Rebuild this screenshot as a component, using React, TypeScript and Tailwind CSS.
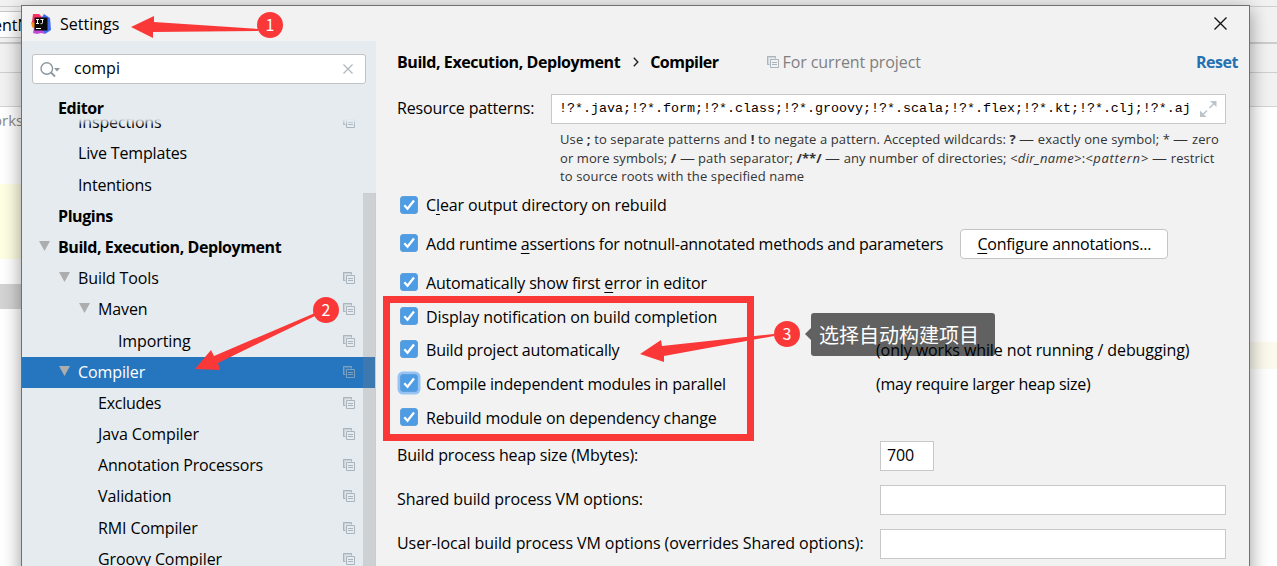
import type { ReactNode } from "react";

type TreeItem = { label: string; indent: string; arrow?: boolean; bold?: boolean; copy?: boolean; selected?: boolean; track: string };

const tree: TreeItem[] = [
  { label: "Inspections", indent: "pl-[56px]", copy: true, track: "tracking-[-0.15px]" },
  { label: "Live Templates", indent: "pl-[56px]", track: "tracking-[-0.15px]" },
  { label: "Intentions", indent: "pl-[56px]", track: "tracking-[-0.2px]" },
  { label: "Plugins", indent: "pl-[36px]", bold: true, track: "tracking-[-0.42px]" },
  { label: "Build, Execution, Deployment", indent: "pl-[36px]", arrow: true, bold: true, track: "tracking-[-0.43px]" },
  { label: "Build Tools", indent: "pl-[56px]", arrow: true, copy: true, track: "tracking-[-0.1px]" },
  { label: "Maven", indent: "pl-[76px]", arrow: true, copy: true, track: "tracking-[-0.1px]" },
  { label: "Importing", indent: "pl-[96px]", copy: true, track: "tracking-[-0.1px]" },
  { label: "Compiler", indent: "pl-[56px]", arrow: true, copy: true, selected: true, track: "tracking-[-0.1px]" },
  { label: "Excludes", indent: "pl-[76px]", copy: true, track: "tracking-[-0.25px]" },
  { label: "Java Compiler", indent: "pl-[76px]", copy: true, track: "tracking-[-0.1px]" },
  { label: "Annotation Processors", indent: "pl-[76px]", copy: true, track: "tracking-[-0.18px]" },
  { label: "Validation", indent: "pl-[76px]", copy: true, track: "tracking-[-0.1px]" },
  { label: "RMI Compiler", indent: "pl-[76px]", copy: true, track: "tracking-[-0.1px]" },
  { label: "Groovy Compiler", indent: "pl-[76px]", copy: true, track: "tracking-[-0.1px]" },
];

function CopyIcon({ className = "" }: { className?: string }) {
  return (
    <svg className={className} width="12" height="12" viewBox="0 0 12 12" fill="none" stroke="currentColor">
      <path d="M0 0h9v2.200H2.200V9H0z" fill="currentColor" fillOpacity="0.450" stroke="none" />
      <path d="M2.500 8.500h-2v-8h8v2" />
      <path d="M3.500 3.500h8v8h-8z" />
      <path d="M5 6.500h5M5 8.500h5" />
    </svg>
  );
}

function Logo() {
  return (
    <svg width="20" height="20" viewBox="0 0 20 20">
      <path d="M1 8l1-8 6 0 4 4-6 9-5 0z" fill="#fc3162" />
      <path d="M0 8l5 1v7l-4-3z" fill="#fb8a1e" />
      <path d="M11 3l2-3 6 4 1 12-6 4-4-5z" fill="#3f6cf2" />
      <path d="M2 19l1-5 8 1 3 5-4-1-4 1z" fill="#c14bd8" />
      <path d="M3.500 3.500h13v13h-13z" fill="#0a0a0a" />
      <path d="M5 5.500h3M6.500 5.500v4M5 9.500h3M9.500 5.500h3M11.500 5.500v3.200q0 1-1.200 1H9.500M5 14.500h5" stroke="#fff" fill="none" />
    </svg>
  );
}

function Check({ top, focus, children, track }: { top: string; focus?: boolean; children: ReactNode; track: string }) {
  return (
    <label className={`flex h-[24px] items-center ${top}`}>
      <span className={`-mt-0.5 flex size-[18px] items-center justify-center rounded-[3px] border border-[#5f9fdb] bg-[#4e9de4] ${focus ? "border-[#3f7fc4] ring-[2.500px] ring-[#97c3f3]" : ""}`}>
        <svg width="14" height="14" viewBox="0 0 14 14" fill="none" stroke="#fff" strokeWidth="2.300">
          <path d="M2.300 7.300l3.200 3.400L12 2.500" />
        </svg>
      </span>
      <span className={`ml-2 ${track}`}>{children}</span>
    </label>
  );
}

function Mn({ children }: { children: ReactNode }) {
  return <span className="underline decoration-1 underline-offset-[3px]">{children}</span>;
}

function Dash() {
  return <span className="inline-block w-[15px] origin-left scale-x-[1.15]">—</span>;
}

function Field({ className = "", children }: { className?: string; children?: ReactNode }) {
  return <div className={`flex items-center border border-[#c8c8c8] bg-white ${className}`}>{children}</div>;
}

function Backdrop() {
  return (
    <div className="absolute inset-0 flex flex-col bg-white text-[16px]">
      <div className="h-[7px] shrink-0 border-b border-[#cfcfcf] bg-[#f2f2f2]" />
      <div className="flex h-[35px] shrink-0 items-center bg-[#f2f2f2]">
        <div className="h-[27px] w-[60px] border-y border-[#c8c8c8] bg-white leading-[26px] whitespace-nowrap"><span className="-ml-[7px]">entN</span></div>
      </div>
      <div className="h-[2px] shrink-0 bg-[#cccccc]" />
      <div className="h-[29px] shrink-0 border-b border-[#cfcfcf] bg-[#f2f2f2]" />
      <div className="h-[34px] shrink-0 border-b border-[#d4d4d4] bg-[#f2f2f2]" />
      <div className="h-[77px] shrink-0 pt-px text-[15px] text-[#8c8880]"><span className="-ml-[7px]">orks</span></div>
      <div className="h-[75px] w-[60px] shrink-0 bg-[#ffffe4]" />
      <div className="mt-[25px] h-[25px] w-[60px] shrink-0 bg-[#d4d4d4]" />
      <div className="mt-[33px] ml-auto h-[27px] w-[60px] shrink-0 bg-[#fcfaed]" />
    </div>
  );
}

function Sidebar() {
  return (
    <aside className="relative flex w-[354px] shrink-0 flex-col overflow-hidden bg-[#e6ebef]">
      <div className="mx-[10px] mt-[13px] flex h-[30px] w-[334px] shrink-0 items-center rounded-[3px] border border-[#c0c4c7] bg-white pl-[7px]">
        <svg width="21" height="17" viewBox="0 0 21 17" fill="none" stroke="#8c979e" strokeWidth="1.400">
          <circle cx="6.800" cy="7.500" r="5.800" />
          <path d="M11 11.500l4 4" strokeWidth="1.800" />
          <path d="M14 7h6l-3 3.500z" fill="#8c979e" stroke="none" />
        </svg>
        <span className="ml-[13px] grow pb-[2px]">compi</span>
        <svg className="mr-[12px]" width="10" height="10" viewBox="0 0 10 10" stroke="#b0b6ba" strokeWidth="1.200">
          <path d="M.5.5l9 9M9.500.5l-9 9" />
        </svg>
      </div>
      <div className="z-10 mt-[12px] h-[23px] shrink-0 bg-[#e6ebef] pl-[36px] leading-[25px] font-bold tracking-[-0.42px]">Editor</div>
      <div className="-mt-[12px] flex flex-col">
        {tree.map((t) => (
          <div key={t.label} className={`flex h-[31.2px] shrink-0 items-center pb-[0.8px] ${t.indent} ${t.selected ? "bg-[#2675bf] text-white" : ""} ${t.bold ? "font-bold" : ""}`}>
            {t.arrow && (
              <svg className="-mt-[2px] mr-[8px] -ml-[19px] shrink-0" width="11" height="10" viewBox="0 0 11 10">
                <path d="M0 0h11L5.500 10z" fill="#adadad" />
              </svg>
            )}
            <span className={`grow whitespace-nowrap ${t.track}`}>{t.label}</span>
            {t.copy && <CopyIcon className={`mr-[21px] shrink-0 ${t.selected ? "text-[#7f9fbb]" : "text-[#a9b4bc]"}`} />}
          </div>
        ))}
      </div>
      <div className="absolute top-[78px] left-0 z-20 h-[6px] w-full bg-linear-to-b from-[#e6ebef] to-transparent" />
      <div className="absolute top-[152px] right-0 bottom-0 w-[13px] border-t border-r border-[#c9cdd2] bg-[#82828240]" />
    </aside>
  );
}

function Main() {
  return (
    <main className="flex grow flex-col pl-[21px] text-black">
      <div className="mt-[9px] flex h-[24px] items-center">
        <b className="tracking-[-0.43px]">Build, Execution, Deployment</b>
        <svg className="ml-[13px]" width="6" height="10" viewBox="0 0 6 10" fill="none" stroke="#222" strokeWidth="1.400"><path d="M.8.8L4.800 5l-4 4.200" /></svg>
        <b className="ml-[11px] tracking-[-0.5px]">Compiler</b>
        <CopyIcon className="ml-[48px] text-[#a9b4bc]" />
        <span className="ml-[4px] grow tracking-[-0.1px] text-[#808080]">For current project</span>
        <b className="mr-[12px] tracking-[-0.45px] text-[#2470b3]">Reset</b>
      </div>
      <div className="mt-[20px] flex items-center">
        <span className="w-[154px] shrink-0 pb-[2px] tracking-[-0.18px]">Resource patterns:</span>
        <Field className="h-[30px] w-[675px] pl-[7px]">
          <span className="grow overflow-hidden font-['Liberation_Mono',monospace] text-[13.33px] whitespace-pre">
            !?*.java;!?*.form;!?*.class;!?*.groovy;!?*.scala;!?*.flex;!?*.kt;!?*.clj;!?*.aj
          </span>
          <svg className="mr-[8px] shrink-0" width="17" height="16" viewBox="0 0 17 16" stroke="#bcc4c9" strokeWidth="1.600" fill="#bcc4c9">
            <path d="M9.500 7l4-4M7 9.500L3 13.500" /><path d="M10 0h6.500v6zM0 9.500V16h6.500z" stroke="none" />
          </svg>
        </Field>
      </div>
      <div className="mt-[6px] ml-[163px] w-[690px] text-[13px] leading-[18.5px] tracking-[0.12px] whitespace-nowrap text-[#333]">
        <div>Use <b>;</b> to separate patterns and <b>!</b> to negate a pattern. Accepted wildcards: <b>?</b> <Dash /> exactly one symbol; * <Dash /> zero</div>
        <div className="tracking-[0.09px]">or more symbols; <b>/</b> <Dash /> path separator; <b>/**/</b> <Dash /> any number of directories; <i className="tracking-[0.3px]">&lt;dir_name&gt;</i>:<i className="tracking-[0.7px]">&lt;pattern&gt;</i> <Dash /> restrict</div>
        <div>to source roots with the specified name</div>
      </div>
      <div className="ml-[3px] flex flex-col whitespace-nowrap">
        <Check top="mt-[8px]" track="pb-[1px] tracking-[-0.13px]">C<Mn>l</Mn>ear output directory on rebuild</Check>
        <div className="mt-[11px] flex h-[30px] items-center">
          <Check top="" track="tracking-[-0.24px]">Add runtime <Mn>a</Mn>ssertions for notnull-annotated methods and parameters</Check>
          <div className="ml-[17px] flex h-[30px] w-[208px] items-center justify-center rounded-[4px] border border-[#c4c4c4] bg-white tracking-[-0.23px]"><span><Mn>C</Mn>onfigure annotations...</span></div>
        </div>
        <Check top="mt-[12px]" track="tracking-[-0.17px]">Automatically show first <Mn>e</Mn>rror in editor</Check>
        <Check top="mt-[10px]" track="tracking-[-0.12px]">Display notification on build completion</Check>
        <div className="mt-[9px] flex">
          <div className="w-[476px]"><Check top="" track="tracking-[-0.2px]">Build project automatically</Check></div>
          <span className="tracking-[-0.1px]">(only works while not running / debugging)</span>
        </div>
        <div className="mt-[10px] flex">
          <div className="w-[476px]"><Check top="" focus track="tracking-[-0.19px]">Compile independent modules in parallel</Check></div>
          <span className="tracking-[-0.24px]">(may require larger heap size)</span>
        </div>
        <Check top="mt-[10px]" track="tracking-[-0.12px]">Rebuild module on dependency change</Check>
      </div>
      <div className="mt-[11px] flex flex-col gap-[14px] tracking-[-0.1px]">
        <div className="flex items-center"><span className="w-[483px] pb-[2px] tracking-[-0.16px]">Build process heap size (Mbytes):</span><Field className="h-[30px] w-[54px] pb-[2px] pl-[6px]">700</Field></div>
        <div className="flex items-center"><span className="w-[483px] pb-[2px]">Shared build process VM options:</span><Field className="h-[30px] w-[346px]" /></div>
        <div className="flex items-center"><span className="w-[483px] pb-[2px] tracking-[-0.08px]">User-local build process VM options (overrides Shared options):</span><Field className="h-[30px] w-[346px]" /></div>
      </div>
    </main>
  );
}

function Marker({ n, className }: { n: number; className: string }) {
  return <div className={`absolute flex size-[26px] items-center justify-center rounded-full bg-[#fb3838] pb-[3px] font-['Noto_Sans_CJK_SC',sans-serif] text-[16px] text-white ${className}`}>{n}</div>;
}

export default function App() {
  return (
    <div className="relative h-[566px] w-[1277px] overflow-hidden bg-white font-['Open_Sans','Noto_Sans_CJK_SC',sans-serif] text-[16px] leading-[24px] text-black">
      <Backdrop />
      <div className="absolute top-[5px] left-[21px] flex h-[600px] w-[1229px] flex-col border border-[#707070] bg-[#f2f2f2] shadow-[0_4px_18px_rgba(0,0,0,0.4)]">
        <header className="flex h-[35px] shrink-0 items-center pl-[9px]">
          <Logo />
          <span className="ml-[9px] grow">Settings</span>
          <svg className="mr-[22px]" width="13" height="13" viewBox="0 0 13 13" stroke="#111" strokeWidth="1.300"><path d="M.5.5l12 12M12.500.5l-12 12" /></svg>
        </header>
        <div className="flex min-h-0 grow">
          <Sidebar />
          <Main />
        </div>
      </div>
      <div className="absolute top-[296px] left-[383px] h-[145px] w-[371px] border-[7px] border-[#fb3838]" />
      <svg className="absolute inset-0" width="1277" height="566" fill="#fb3838">
        <path d="M131 27L154 16v6l104 7v2l-105 1v6z" />
        <path d="M195 369l16-19 3 6 101-43v3l-97 47 2 7z" />
        <path d="M640 354l21-14 1 6 112-12v2l-110 20v6z" />
      </svg>
      <Marker n={1} className="top-[12px] left-[257px]" />
      <Marker n={2} className="top-[297px] left-[313px]" />
      <Marker n={3} className="top-[321px] left-[774px]" />
      <div className="absolute top-[313px] left-[811px] flex h-[43px] w-[184px] items-center rounded-[3px] bg-black/60 pl-[8px] font-['Noto_Sans_CJK_SC',sans-serif] text-[20px] text-white">
        <span className="absolute top-[15px] -left-[6px] border-y-[6px] border-r-[6px] border-y-transparent border-r-black/60" />
        选择自动构建项目
      </div>
    </div>
  );
}
